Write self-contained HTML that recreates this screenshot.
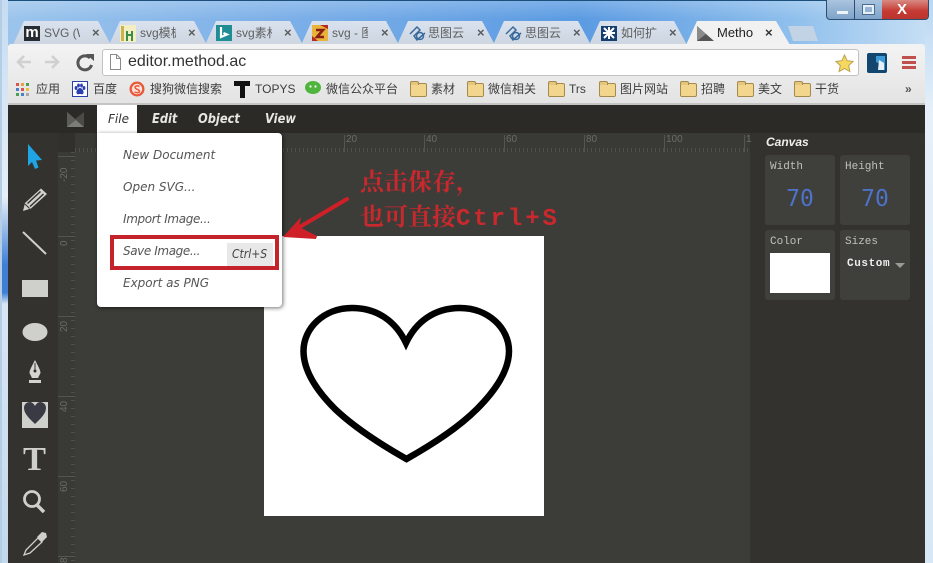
<!DOCTYPE html>
<html lang="zh">
<head>
<meta charset="utf-8">
<title>Method Draw</title>
<style>
html,body{margin:0;padding:0;width:933px;height:563px;overflow:hidden;background:#cfe2f3}
body{position:relative;font-family:"Liberation Sans","Noto Sans CJK SC",sans-serif}
.a,.a *{box-sizing:border-box}
.a{position:absolute}
.t{position:absolute;white-space:nowrap;line-height:1}
.tab{position:absolute;top:21px;width:98px;height:24px;background:linear-gradient(#d9e2ee,#ccd5e0);clip-path:polygon(0 100%,11px 0,85px 0,98px 100%)}
.tt{position:absolute;top:26px;font-size:12px;color:#5f5f5f;white-space:nowrap;line-height:14px;overflow:hidden;width:36px}
.x{position:absolute;top:26px;font-size:13px;font-weight:bold;color:#5c5c5c;line-height:14px}
.bm{position:absolute;top:83px;font-size:12px;color:#3d3d3d;line-height:13px;white-space:nowrap}
.fd{position:absolute;top:83px;width:15px;height:12px;background:#f3d68e;border:1px solid #a58a4e;border-radius:2px}
.fd:before{content:"";position:absolute;left:-1px;top:-3px;width:7px;height:3px;background:#e4c67d;border:1px solid #a58a4e;border-bottom:0;border-radius:2px 2px 0 0}
.mi{position:absolute;left:123px;font:italic 12px "DejaVu Sans",sans-serif;color:#555;line-height:14px;white-space:nowrap}
.bx{position:absolute;background:#3f3f3b;border-radius:3px}
.lb{position:absolute;left:5px;top:6px;font:11px "Liberation Mono",monospace;color:#c0c0bb;line-height:12px}
.n{position:absolute;left:0;right:0;top:31px;text-align:center;font:23px "DejaVu Sans Mono","Liberation Mono",monospace;color:#4d72c8;line-height:26px}
.rl{position:absolute;font:10px "Liberation Sans",sans-serif;color:#6c6c65;line-height:10px}
.rv{transform:rotate(-90deg);transform-origin:left top}
</style>
</head>
<body>
<!-- window frame -->
<div class="a" style="left:0;top:0;width:933px;height:46px;background:linear-gradient(90deg,#9cc5ec 0,#7db0e8 30%,#5b9be2 62%,#8fbfec 85%,#c8e0f5 100%)"></div>
<div class="a" style="left:0;top:0;width:933px;height:1px;background:#1d4f7c"></div>
<div class="a" style="left:0;top:1px;width:933px;height:18px;background:linear-gradient(rgba(255,255,255,.2),rgba(255,255,255,0))"></div>
<div class="a" style="left:0;top:0;width:8px;height:563px;background:linear-gradient(#c6dcf2,#e6eff8 35%,#3f7fd6 47%,#3f7fd6 52%,#d8e6f4 54%,#c3d8ec)"></div>
<div class="a" style="left:0;top:0;width:2px;height:563px;background:#b4cee6"></div>
<div class="a" style="left:925px;top:0;width:8px;height:563px;background:linear-gradient(#b9d7f3,#e6f0f9 20%,#d8e7f5)"></div>

<!-- window controls -->
<div class="a" style="left:826px;top:0;width:103px;height:20px;border:1px solid #2a4d70;border-top:0;border-radius:0 0 4px 4px;overflow:hidden;background:linear-gradient(#a9c4df,#7fa3c9)">
  <div class="a" style="left:27px;top:0;width:1px;height:20px;background:#2a4d70"></div>
  <div class="a" style="left:55px;top:0;width:46px;height:20px;background:linear-gradient(#d88a84,#c63a32 55%,#b8352e)"></div>
  <div class="a" style="left:10px;top:11px;width:11px;height:3px;background:#eef3f8"></div>
  <div class="a" style="left:36px;top:5px;width:11px;height:9px;border:2px solid #e7eef5;box-shadow:0 0 0 1px #4b6d90"></div>
  <div class="t" style="left:70px;top:2px;font-size:15px;font-weight:bold;color:#fff">X</div>
</div>

<!-- tabs -->
<div class="tab" style="left:13px"></div><div class="tab" style="left:109px"></div><div class="tab" style="left:205px"></div><div class="tab" style="left:301px"></div><div class="tab" style="left:397px"></div><div class="tab" style="left:493px"></div><div class="tab" style="left:589px"></div>
<div class="a" style="left:788px;top:26px;width:30px;height:15px;background:#c3d3e6;clip-path:polygon(0 0,25px 0,30px 100%,5px 100%);"></div>
<div class="tab" style="left:686px;background:#f1f1f1;width:104px;clip-path:polygon(0 100%,11px 0,90px 0,104px 100%)"></div>

<!-- favicons -->
<div class="a" style="left:24px;top:26px;width:16px;height:15px;background:#272c33;color:#fff;font:bold 15px/13px 'Liberation Sans',sans-serif;text-align:center">m</div>
<svg class="a" style="left:120px;top:25px" width="16" height="17" viewBox="0 0 16 17"><rect width="16" height="17" fill="#f4efc0"/><rect x="1" y="1" width="3" height="15" fill="#c9b352"/><path d="M6 6h2v10H6zM11 6h2v10h-2zM6 9h7v2H6z" fill="#3c8d4a"/></svg>
<svg class="a" style="left:216px;top:25px" width="16" height="16" viewBox="0 0 16 16"><rect width="16" height="16" fill="#1f8d94"/><path d="M5 2v10l6-2.5L7.500 8" fill="none" stroke="#fff" stroke-width="2.200"/></svg>
<svg class="a" style="left:312px;top:25px" width="16" height="16" viewBox="0 0 16 16"><rect width="16" height="16" fill="#e8b53a"/><path d="M8 0L16 4V0zM0 11l6 5H0z" fill="#b52a20"/><path d="M4 5h7L5 12h7" fill="none" stroke="#8a1f14" stroke-width="2.600"/></svg>
<svg class="a" style="left:409px;top:25px" width="17" height="16" viewBox="0 0 17 16" fill="none" stroke="#3a6a9c" stroke-width="1.500"><path d="M1 9L8 2l3 3-6 6 3 4 8-7"/><circle cx="11" cy="11" r="3.500"/></svg>
<svg class="a" style="left:505px;top:25px" width="17" height="16" viewBox="0 0 17 16" fill="none" stroke="#3a6a9c" stroke-width="1.500"><path d="M1 9L8 2l3 3-6 6 3 4 8-7"/><circle cx="11" cy="11" r="3.500"/></svg>
<svg class="a" style="left:601px;top:26px" width="16" height="15" viewBox="0 0 16 15"><rect width="16" height="15" fill="#173f6e"/><path d="M3 2l10 10M13 2L3 12M8 1v12M2 7h12" stroke="#fff" stroke-width="2"/></svg>
<svg class="a" style="left:697px;top:26px" width="17" height="15" viewBox="0 0 17 15"><path d="M0 0L17 15H0z" fill="#555"/><path d="M0 0L9 8 0 15z" fill="#8a8a8a"/></svg>

<div class="tt" style="left:44px">SVG (W</div><div class="x" style="left:92px">×</div>
<div class="tt" style="left:140px">svg模板</div><div class="x" style="left:188px">×</div>
<div class="tt" style="left:236px">svg素材</div><div class="x" style="left:284px">×</div>
<div class="tt" style="left:332px">svg - 图</div><div class="x" style="left:381px">×</div>
<div class="tt" style="left:428px">思图云</div><div class="x" style="left:477px">×</div>
<div class="tt" style="left:525px">思图云</div><div class="x" style="left:573px">×</div>
<div class="tt" style="left:621px">如何扩</div><div class="x" style="left:669px">×</div>
<div class="tt" style="left:717px;color:#222;font-size:13px">Metho</div><div class="x" style="left:765px;color:#333">×</div>

<!-- toolbar -->
<div class="a" style="left:8px;top:44px;width:917px;height:60px;background:linear-gradient(#f3f3f3,#ececec 45%,#e3e3e3);border-radius:3px 3px 0 0"></div>
<div class="a" style="left:8px;top:103px;width:917px;height:2px;background:#c4c4c4"></div>
<svg class="a" style="left:16px;top:52px" width="80" height="20" viewBox="0 0 80 20" fill="none">
  <path d="M2 10h13M8 4l-6 6 6 6" stroke="#d0d0d0" stroke-width="2.600"/>
  <path d="M46 10h-13M40 4l6 6-6 6" stroke="#d0d0d0" stroke-width="2.600" transform="translate(-4 0)"/>
  <path d="M74 6a7 7 0 1 0 1.600 7" stroke="#555" stroke-width="3"/>
  <path d="M70 2h8v7z" fill="#555"/>
</svg>
<div class="a" style="left:102px;top:49px;width:757px;height:27px;background:#fff;border:1px solid #c2c2c2;border-radius:3px"></div>
<svg class="a" style="left:109px;top:53px" width="13" height="18" viewBox="0 0 13 18"><path d="M1.500 1.500h6l4 4v11h-10zM7.500 1.500v4h4" fill="#fff" stroke="#8a8a8a"/></svg>
<div class="t" style="left:128px;top:53px;font-size:16px;line-height:18px;color:#333">editor.method.ac</div>
<svg class="a" style="left:835px;top:54px" width="19" height="19" viewBox="0 0 19 19"><path d="M9.500 1l2.600 5.700 6 .7-4.400 4.100 1.200 6-5.400-3-5.400 3 1.200-6L.9 7.400l6-.7z" fill="#f6d860" stroke="#b9a24a"/></svg>
<svg class="a" style="left:867px;top:53px" width="20" height="20" viewBox="0 0 20 20"><rect width="20" height="20" rx="2" fill="#12466f"/><path d="M9 3h9v14h-5V11l-4-2z" fill="#3d9ad6"/><path d="M12 7l5 3v7h-6z" fill="#e8f0f6"/></svg>
<div class="a" style="left:902px;top:56px;width:14px;height:3px;background:#c0504d"></div>
<div class="a" style="left:902px;top:61px;width:14px;height:3px;background:#c0504d"></div>
<div class="a" style="left:902px;top:66px;width:14px;height:3px;background:#c0504d"></div>

<!-- bookmarks -->
<svg class="a" style="left:16px;top:83px" width="13" height="13" viewBox="0 0 13 13"><g><rect width="3" height="3" fill="#d9534f"/><rect x="5" width="3" height="3" fill="#e9a33c"/><rect x="10" width="3" height="3" fill="#4c9f50"/><rect y="5" width="3" height="3" fill="#4a7fc9"/><rect x="5" y="5" width="3" height="3" fill="#d9534f"/><rect x="10" y="5" width="3" height="3" fill="#e9c13c"/><rect y="10" width="3" height="3" fill="#4c9f50"/><rect x="5" y="10" width="3" height="3" fill="#4a7fc9"/><rect x="10" y="10" width="3" height="3" fill="#a8a8a8"/></g></svg>
<div class="bm" style="left:36px">应用</div>
<svg class="a" style="left:72px;top:81px" width="16" height="16" viewBox="0 0 16 16"><rect x=".5" y=".5" width="15" height="15" fill="#fff" stroke="#2a3fb0"/><g fill="#2a3fb0"><ellipse cx="4" cy="7" rx="1.400" ry="2"/><ellipse cx="6.500" cy="4.500" rx="1.400" ry="2"/><ellipse cx="9.500" cy="4.500" rx="1.400" ry="2"/><ellipse cx="12" cy="7" rx="1.400" ry="2"/><path d="M8 7c2 0 4 3 3.500 5S9 13 8 13s-3 1-3.500-1S6 7 8 7z"/></g></svg>
<div class="bm" style="left:93px">百度</div>
<svg class="a" style="left:129px;top:81px" width="16" height="16" viewBox="0 0 16 16"><circle cx="8" cy="8" r="7.500" fill="#e8593a"/><circle cx="8" cy="8" r="5.200" fill="#fbe3dc"/><path d="M10.500 5.500C9 4.500 6 4.800 6 6.500S10.500 8.500 10.500 10.200 7 12 5.500 10.800" fill="none" stroke="#e8593a" stroke-width="1.500"/></svg>
<div class="bm" style="left:150px">搜狗微信搜索</div>
<svg class="a" style="left:234px;top:81px" width="16" height="17" viewBox="0 0 16 17"><path d="M0 0h16v5h-5v12H6V5H0z" fill="#111"/></svg>
<div class="bm" style="left:255px">TOPYS</div>
<svg class="a" style="left:305px;top:81px" width="16" height="14" viewBox="0 0 16 14"><ellipse cx="8" cy="6.500" rx="8" ry="6.500" fill="#4fb53c"/><circle cx="5.500" cy="5.500" r="1.100" fill="#fff"/><circle cx="10.500" cy="5.500" r="1.100" fill="#fff"/></svg>
<div class="bm" style="left:326px">微信公众平台</div>
<div class="fd" style="left:410px"></div><div class="bm" style="left:431px">素材</div>
<div class="fd" style="left:467px"></div><div class="bm" style="left:488px">微信相关</div>
<div class="fd" style="left:548px"></div><div class="bm" style="left:569px">Trs</div>
<div class="fd" style="left:599px"></div><div class="bm" style="left:620px">图片网站</div>
<div class="fd" style="left:680px"></div><div class="bm" style="left:701px">招聘</div>
<div class="fd" style="left:737px"></div><div class="bm" style="left:758px">美文</div>
<div class="fd" style="left:794px"></div><div class="bm" style="left:815px">干货</div>
<div class="bm" style="left:905px;color:#555;font-weight:bold">»</div>

<!-- app -->
<div class="a" style="left:8px;top:105px;width:917px;height:458px;background:#3c3c38"></div>
<div class="a" style="left:8px;top:105px;width:917px;height:28px;background:#2b2a26"></div>
<div class="a" style="left:8px;top:133px;width:50px;height:430px;background:#33322e"></div>
<div class="a" style="left:750px;top:133px;width:175px;height:430px;background:#33322e"></div>

<!-- top ruler -->
<div class="a" style="left:58px;top:133px;width:692px;height:19px;background:#393935"></div>
<div class="a" style="left:75px;top:148px;width:675px;height:4px;background:repeating-linear-gradient(90deg,#50504a 0 1px,transparent 1px 4px)"></div>
<div class="a" style="left:344px;top:135px;width:1px;height:17px;background:#55554f;box-shadow:80px 0 #55554f,160px 0 #55554f,240px 0 #55554f,320px 0 #55554f,400px 0 #55554f"></div>
<div class="rl" style="left:346px;top:135px">20</div><div class="rl" style="left:426px;top:135px">40</div><div class="rl" style="left:506px;top:135px">60</div><div class="rl" style="left:586px;top:135px">80</div><div class="rl" style="left:666px;top:135px">100</div><div class="rl" style="left:746px;top:135px">1</div>

<!-- left ruler -->
<div class="a" style="left:58px;top:133px;width:17px;height:19px;background:#31302c"></div>
<div class="a" style="left:58px;top:152px;width:17px;height:411px;background:#393935"></div>
<div class="a" style="left:71px;top:152px;width:4px;height:411px;background:repeating-linear-gradient(#50504a 0 1px,transparent 1px 8px)"></div>
<div class="a" style="left:58px;top:156px;width:17px;height:1px;background:#55554f;box-shadow:0 80px #55554f,0 160px #55554f,0 240px #55554f,0 320px #55554f,0 400px #55554f"></div>
<div class="rl rv" style="left:60px;top:182px">-20</div><div class="rl rv" style="left:60px;top:246px">0</div><div class="rl rv" style="left:60px;top:332px">20</div><div class="rl rv" style="left:60px;top:412px">40</div><div class="rl rv" style="left:60px;top:492px">60</div><div class="rl rv" style="left:60px;top:563px">8</div>

<!-- logo -->
<svg class="a" style="left:67px;top:112px" width="17" height="15" viewBox="0 0 17 15"><path d="M0 0L17 15H0z" fill="#7c7c78"/><path d="M0 0L9 8 0 15z" fill="#5c5c58"/><path d="M17 0v15L8 7z" fill="#4a4a46"/></svg>

<!-- tools -->
<svg class="a" style="left:8px;top:133px" width="50" height="430" viewBox="8 133 50 430">
  <path d="M28 144V166L32 162 35 169 38.500 167.500 36 160.500 42 160Z" fill="#1fa5e6"/>
  <path d="M23 211L25 203 41 188.500 47 194 31 208.500Z" fill="#d0d0cc"/><path d="M27.500 203.500L40.500 191.500M30 206.500L43.500 194" stroke="#33322e" stroke-width="1.500"/><path d="M25 204l4.500 4.500" stroke="#33322e"/>
  <path d="M23 232L46 254" stroke="#cfcfcb" stroke-width="2"/>
  <rect x="22" y="280" width="26" height="17" fill="#cfcfcb"/>
  <ellipse cx="35" cy="332" rx="12.500" ry="9" fill="#cfcfcb"/>
  <path d="M35 360C32 366 29.500 370 29.500 373L32 378H38L40.500 373C40.500 370 38 366 35 360Z" fill="#d4d4d0"/><circle cx="35" cy="371" r="1.500" fill="#33322e"/><path d="M35 363V370" stroke="#33322e"/><rect x="29" y="380" width="12" height="3" fill="#d4d4d0"/>
  <rect x="22" y="402" width="26" height="26" fill="#cfcfcb"/><path d="M35 424C30 419 24 414 24 408 24 404 27 402 30 402 32 402 34 404 35 406 36 404 38 402 40 402 43 402 46 404 46 408 46 414 40 419 35 424Z" fill="#3a3a44"/>
  <text x="23" y="470" font-family="Liberation Serif,serif" font-weight="bold" font-size="34" fill="#cfcfcb" textLength="23" lengthAdjust="spacingAndGlyphs">T</text>
  <circle cx="32" cy="499" r="7.500" fill="none" stroke="#cfcfcb" stroke-width="2.800"/><path d="M37 505L44 512" stroke="#cfcfcb" stroke-width="3.500"/>
  <path d="M24 555L26 550 38 538 42 542 30 553Z" fill="none" stroke="#cfcfcb" stroke-width="1.300"/><path d="M37 537L42 532 46 533 47 537 42 542Z" fill="#cfcfcb"/>
</svg>

<!-- canvas -->
<div class="a" style="left:264px;top:236px;width:280px;height:280px;background:#fff"></div>
<svg class="a" style="left:264px;top:236px" width="280" height="280" viewBox="264 236 280 280"><path d="M406 343C396 322 378 308 352 308 324 308 303.500 328 303.500 351 303.500 372 318 392 335 409 355 428 380 444 406.500 459 433 444 458 428 477 409 494 392 509 372 509 351 509 328 488 308 460 308 434 308 416 322 406 343Z" fill="#fff" stroke="#000" stroke-width="6.500" stroke-miterlimit="10"/></svg>

<!-- menu -->
<div class="t" style="left:152px;top:112px;font:italic bold 13px/15px 'DejaVu Sans',sans-serif;color:#e6e6e2;transform-origin:left;transform:scaleX(.88)">Edit</div>
<div class="t" style="left:198px;top:112px;font:italic bold 13px/15px 'DejaVu Sans',sans-serif;color:#e6e6e2;transform-origin:left;transform:scaleX(.88)">Object</div>
<div class="t" style="left:265px;top:112px;font:italic bold 13px/15px 'DejaVu Sans',sans-serif;color:#e6e6e2;transform-origin:left;transform:scaleX(.88)">View</div>
<div class="a" style="left:97px;top:105px;width:40px;height:30px;background:#fff"></div>
<div class="t" style="left:108px;top:112px;font:italic 12px/15px 'DejaVu Sans',sans-serif;color:#333">File</div>
<div class="a" style="left:97px;top:133px;width:185px;height:174px;background:#fff;border-radius:0 4px 4px 4px;box-shadow:1px 1px 4px rgba(0,0,0,.55)"></div>
<div class="mi" style="top:148px">New Document</div>
<div class="mi" style="top:180px">Open SVG...</div>
<div class="mi" style="top:212px;letter-spacing:-.35px">Import Image...</div>
<div class="mi" style="top:244px;letter-spacing:-.4px">Save Image...</div>
<div class="mi" style="top:276px">Export as PNG</div>
<div class="a" style="left:227px;top:243px;width:46px;height:24px;background:#e8e8e8"></div>
<div class="t" style="left:232px;top:247px;font:italic 12px/15px 'DejaVu Sans',sans-serif;color:#444;transform-origin:left;transform:scaleX(.9)">Ctrl+S</div>
<div class="a" style="left:110px;top:235px;width:169px;height:35px;border:4px solid #c5232b"></div>

<!-- annotation -->
<div class="t" style="left:360px;top:167px;font:bold 24px/26px 'Noto Serif CJK SC',serif;color:#c9282d">点击保存，</div>
<div class="t" style="left:360px;top:202px;font:bold 24px/26px 'Noto Serif CJK SC',serif;color:#c9282d">也可直接<span style="font-family:'Liberation Mono',monospace;font-weight:bold;letter-spacing:2.900px">Ctrl+S</span></div>
<svg class="a" style="left:280px;top:195px" width="70" height="50" viewBox="280 195 70 50"><path d="M347 199L298 228" stroke="#cf2028" stroke-width="4" stroke-linecap="round"/><path d="M283 237L301 217 299 227 317 236 316 239Z" fill="#cf2028"/></svg>

<!-- panel -->
<div class="t" style="left:766px;top:135px;font:italic bold 12px/15px 'Liberation Sans',sans-serif;color:#efefeb">Canvas</div>
<div class="bx" style="left:765px;top:155px;width:70px;height:70px"><div class="lb">Width</div><div class="n">70</div></div>
<div class="bx" style="left:840px;top:155px;width:70px;height:70px"><div class="lb">Height</div><div class="n">70</div></div>
<div class="bx" style="left:765px;top:230px;width:70px;height:70px"><div class="lb">Color</div><div class="a" style="left:5px;top:23px;width:60px;height:40px;background:#fff"></div></div>
<div class="bx" style="left:840px;top:230px;width:70px;height:70px"><div class="lb">Sizes</div><div class="t" style="left:7px;top:28px;font:bold 11px/13px 'Liberation Mono',monospace;color:#eee;letter-spacing:.6px">Custom</div><div class="a" style="left:55px;top:33px;width:0;height:0;border:5px solid transparent;border-top:5px solid #9a9a96"></div></div>
</body>
</html>
